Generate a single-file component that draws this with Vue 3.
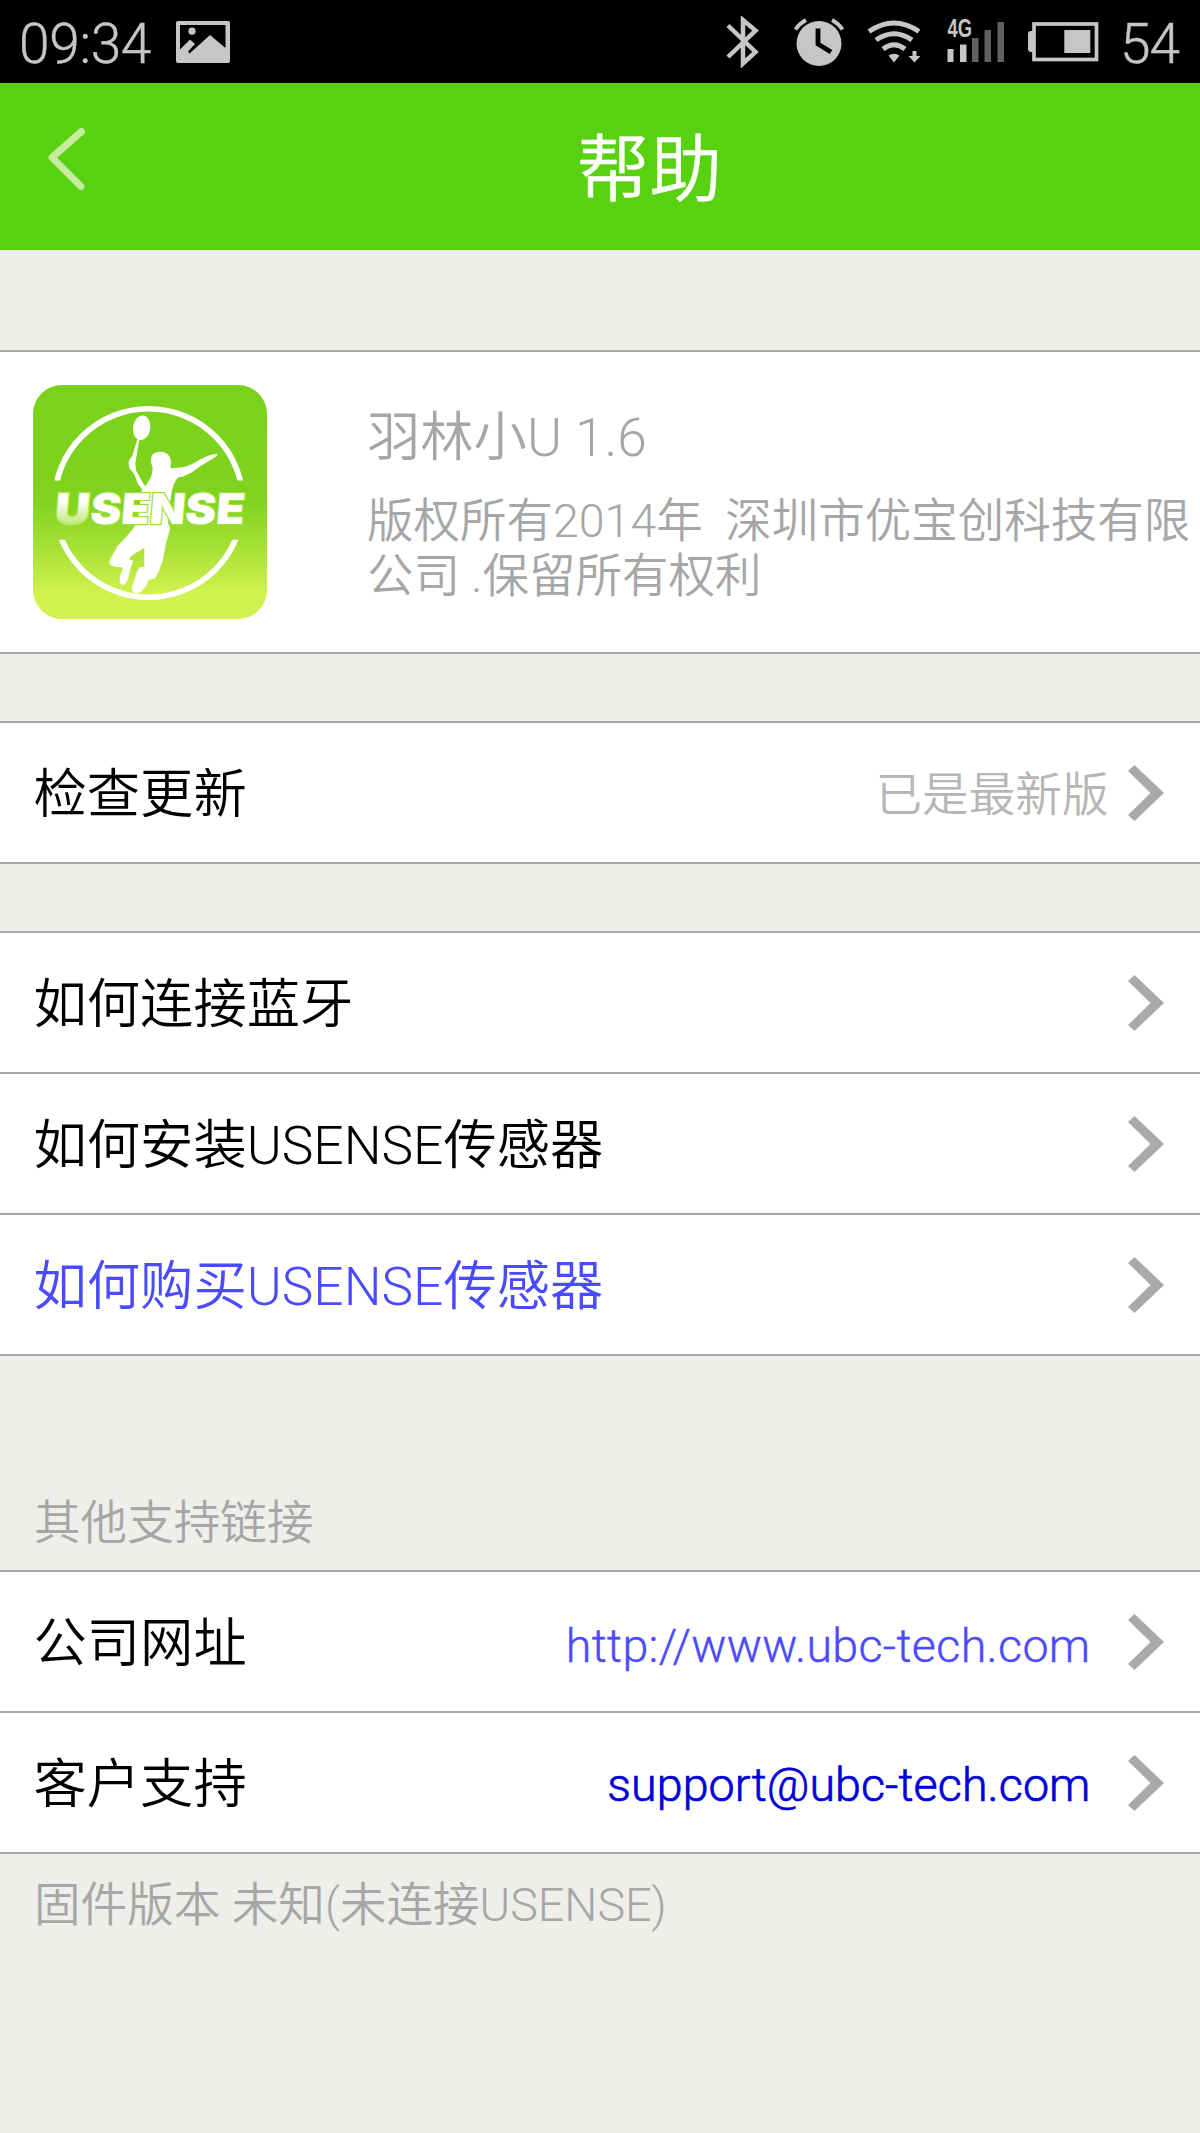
<script setup>
const guides = [
  { label: '如何连接蓝牙' },
  { label: '如何安装USENSE传感器' },
  { label: '如何购买USENSE传感器', link: true },
]
const contacts = [
  { label: '公司网址', value: 'http://www.ubc-tech.com', kind: 'site' },
  { label: '客户支持', value: 'support@ubc-tech.com', kind: 'mail' },
]
</script>

<template>
  <div class="screen">
    <div class="status">
      <span class="time">09:34</span>
      <svg class="i-pic" width="54" height="43" viewBox="176 21 54 43">
        <path fill="#c6c6c6" fill-rule="evenodd" d="M178 21h50q2 0 2 2v38q0 2-2 2h-50q-2 0-2-2V23q0-2 2-2zM180 25v24.500l10-10 5 4.500-7 7.500 1.500 2 20.500-18.500 15.500 13V25z" />
        <circle cx="192" cy="31.200" r="3.600" fill="#c6c6c6" />
      </svg>
      <span class="spacer"></span>
      <svg class="i-bt" width="34" height="52" viewBox="726 16 34 52" fill="none" stroke="#c6c6c6" stroke-width="4.500">
        <path d="M728 25.500L755.500 52 743 63.500V20l12.500 10.500L728 57" />
      </svg>
      <svg class="i-alarm" width="50" height="49" viewBox="794 18 50 49">
        <circle cx="819" cy="43.500" r="22.500" fill="#c6c6c6" />
        <path d="M818 28.500V44l13 8" fill="none" stroke="#000" stroke-width="4.800" />
        <path d="M795.500 29.500q4-6 10.500-9.500M842.500 29.500q-4-6-10.500-9.500" fill="none" stroke="#c6c6c6" stroke-width="3.800" />
      </svg>
      <svg class="i-wifi" width="54" height="44" viewBox="867 20 54 44">
        <g fill="none" stroke="#c6c6c6" stroke-width="5">
          <path d="M869 31.500q25-17 50 0" />
          <path d="M876 40q18-12.500 36 0" />
          <path d="M883 49q11-8.500 22 0" />
        </g>
        <path fill="#c6c6c6" d="M888.500 55.500q5.500-3.500 11 0l-5.500 7zM912.500 51h4v5h4l-6 6.500-6-6.500h4z" />
      </svg>
      <svg class="i-signal" width="58" height="52" viewBox="947 11 58 52">
        <path fill="#c6c6c6" d="M947.500 49h6v13h-6zM960 44.500h6.500V62H960z" />
        <path fill="#616161" d="M972 38h6.500v24H972zM984.500 30h6.500v32h-6.500zM997.500 22h6.500v40h-6.500z" />
        <text x="947.500" y="36.500" textLength="24.500" lengthAdjust="spacingAndGlyphs" class="net">4G</text>
      </svg>
      <svg class="i-battery" width="71" height="40" viewBox="1028 22 71 40">
        <rect x="1034" y="24" width="62.500" height="35.500" fill="none" stroke="#c6c6c6" stroke-width="3.700" />
        <rect x="1064.300" y="30" width="26" height="23" fill="#c6c6c6" />
        <path fill="#c6c6c6" d="M1034 31h-3q-3 0-3 3v15q0 3 3 3h3z" />
      </svg>
      <span class="level">54</span>
    </div>

    <header class="bar">
      <svg class="back" width="42" height="68" viewBox="46 124 42 68">
        <path d="M81.500 131.500L52 157.500l29 29" fill="none" stroke="#c4ec9c" stroke-width="7" stroke-linecap="round" stroke-linejoin="round" />
      </svg>
      <h1>帮助</h1>
    </header>

    <section class="group about">
      <svg class="logo" width="234" height="234" viewBox="100 135 700 700">
        <defs>
          <linearGradient id="bg" x1="0" y1="0" x2="0" y2="1">
            <stop offset="0" stop-color="#7ad11b" />
            <stop offset=".5" stop-color="#80d320" />
            <stop offset=".68" stop-color="#a3e034" />
            <stop offset=".9" stop-color="#d3f24f" />
            <stop offset="1" stop-color="#d3f24f" />
          </linearGradient>
          <linearGradient id="u" x1="0" y1="0" x2="0" y2="1">
            <stop offset=".35" stop-color="#fff" />
            <stop offset=".85" stop-color="#b4e66c" />
          </linearGradient>
          <clipPath id="arcs"><path d="M100 135h700v286H100zM100 598h700v237H100z" /></clipPath>
        </defs>
        <rect x="100" y="135" width="700" height="700" rx="86" fill="url(#bg)" />
        <circle cx="446" cy="488" r="282" fill="none" stroke="#fff" stroke-width="17" clip-path="url(#arcs)" />
        <g fill="#fff">
          <ellipse cx="425" cy="263" rx="26" ry="37" transform="rotate(8 425 263)" />
          <path d="M412 297l6 1-12 72 2 20 16 29 12 20 18-30 4-24-5-20q-2-29 26-30 30 0 34 28l-2 21 38-3q20-4 47-21 26-15 45-18l11-1-3 7-16 10-34 21-22 16-26 13-17 4q-17 19-21 54l-8 60-1 22 6 17-13 47-8 44-14 39-10 18-19 6-8 18-15 17q-22 10-28-10l15-48 8-15 15-2 0-57-22 13-20 14-3 8 12 4-8 22-8 33q-12 26-25 11l1-18 9-28-26-3q-18-3-13-20l22-40 25-27 23-27 13-22 13-96-12-15-11-29-14-18q-8-24 8-36z" />
        </g>
        <g class="brand" transform="translate(0 552) skewX(-5)">
          <text x="163" y="0" textLength="104" lengthAdjust="spacingAndGlyphs" fill="url(#u)" stroke="#b5e84b">U</text>
          <text x="269" y="0" textLength="461" lengthAdjust="spacingAndGlyphs" fill="#fff" stroke="#9ade3a">SENSE</text>
        </g>
      </svg>
      <div class="info">
        <div class="name">羽林小U 1.6</div>
        <div class="copy">版权所有2014年&nbsp; 深圳市优宝创科技有限<br>公司 .保留所有权利</div>
      </div>
    </section>

    <section class="group update">
      <div class="row">
        <span class="label">检查更新</span>
        <span class="value state">已是最新版</span>
        <svg class="chev" width="36" height="56" viewBox="0 0 36 56"><path d="M6.500 0L36 28 6.500 56 0 50l22.500-22L0 6z" /></svg>
      </div>
    </section>

    <section class="group guides">
      <div v-for="g in guides" :key="g.label" class="row">
        <span class="label" :class="{ link: g.link }">{{ g.label }}</span>
        <svg class="chev" width="36" height="56" viewBox="0 0 36 56"><path d="M6.500 0L36 28 6.500 56 0 50l22.500-22L0 6z" /></svg>
      </div>
    </section>

    <div class="caption">其他支持链接</div>

    <section class="group">
      <div v-for="c in contacts" :key="c.label" class="row">
        <span class="label">{{ c.label }}</span>
        <span class="value" :class="c.kind">{{ c.value }}</span>
        <svg class="chev" width="36" height="56" viewBox="0 0 36 56"><path d="M6.500 0L36 28 6.500 56 0 50l22.500-22L0 6z" /></svg>
      </div>
    </section>

    <div class="firmware">固件版本 未知(未连接USENSE)</div>
  </div>
</template>

<style>
body { margin: 0; }
</style>

<style scoped>
.screen {
  width: 1200px;
  height: 2133px;
  overflow: hidden;
  background: #eeeeea;
  font-family: Roboto, "Noto Sans CJK SC", sans-serif;
  font-weight: 350;
  white-space: nowrap;
}
svg { display: block; flex: none; }
.status {
  height: 83px;
  box-sizing: border-box;
  background: #000;
  color: #c6c6c6;
  display: flex;
  align-items: flex-start;
  padding: 0 20px 0 19px;
}
.time, .level {
  font-size: 55px;
  line-height: 64px;
  padding-top: 12px;
  font-weight: 300;
  -webkit-text-stroke: 0.4px currentColor;
}
.time { width: 157px; letter-spacing: -0.3px; }
.level { width: 60px; letter-spacing: -1px; }
.spacer { flex: 1; }
.i-pic { margin-top: 21px; }
.i-bt { margin: 16px 34px 0 0; }
.i-alarm { margin: 18px 23px 0 0; }
.i-wifi { margin: 20px 26px 0 0; }
.i-signal { margin: 11px 23px 0 0; }
.i-battery { margin: 22px 21px 0 0; }
.net { font: 700 25px "Liberation Sans", sans-serif; fill: #c6c6c6; }
.bar {
  height: 167px;
  background: #57d110;
  display: flex;
  align-items: flex-start;
}
.back { margin: 41px 0 0 46px; }
h1 {
  margin: 38px 0 0 489px;
  font-size: 72.500px;
  line-height: 100px;
  font-weight: 350;
  color: #fff;
  -webkit-text-stroke: 0.5px currentColor;
}
.group {
  background: #fff;
  border-bottom: 2px solid #a6a6a6;
}
.about {
  height: 300px;
  margin-top: 100px;
  border-top: 2px solid #a6a6a6;
  display: flex;
}
.logo { margin: 33px 0 0 33px; }
.info { margin-left: 100px; color: #a6a6a6; }
.name { margin-top: 55px; font-size: 53.300px; line-height: 62px; }
.copy { margin-top: 25px; font-size: 46.500px; line-height: 54.500px; }
.update, .guides { margin-top: 67px; }
.row {
  height: 139px;
  border-top: 2px solid #a6a6a6;
  display: flex;
  align-items: center;
  padding: 0 36.500px 0 33.500px;
}
.label { font-size: 53.300px; line-height: 70px; padding-top: 5px; color: #000; }
.label.link { color: #4a4aff; }
.chev { fill: #a9a9a9; }
.value { margin-left: auto; font-size: 46.600px; line-height: 60px; }
.value + .chev { margin-left: 37px; }
.state { color: #b6b6b6; padding-top: 4px; }
.state + .chev { margin-left: 19px; }
.row > .label + .chev { margin-left: auto; }
.site {
  color: #4a4aff;
  padding-top: 8px;
  font-weight: 300;
  letter-spacing: 0.330px;
  -webkit-text-stroke: 0.4px currentColor;
}
.mail {
  color: #0000d8;
  padding-top: 4px;
  letter-spacing: 0.080px;
  -webkit-text-stroke: 0.7px currentColor;
}
.caption, .firmware {
  padding-left: 34px;
  font-size: 46.600px;
  line-height: 60px;
  color: #a6a6a6;
}
.caption { height: 77px; padding-top: 137px; }
.firmware { padding-top: 21px; }
.brand text {
  font: 900 127px Inter, "Liberation Sans", sans-serif;
  stroke-width: 7px;
  paint-order: stroke;
}
</style>
